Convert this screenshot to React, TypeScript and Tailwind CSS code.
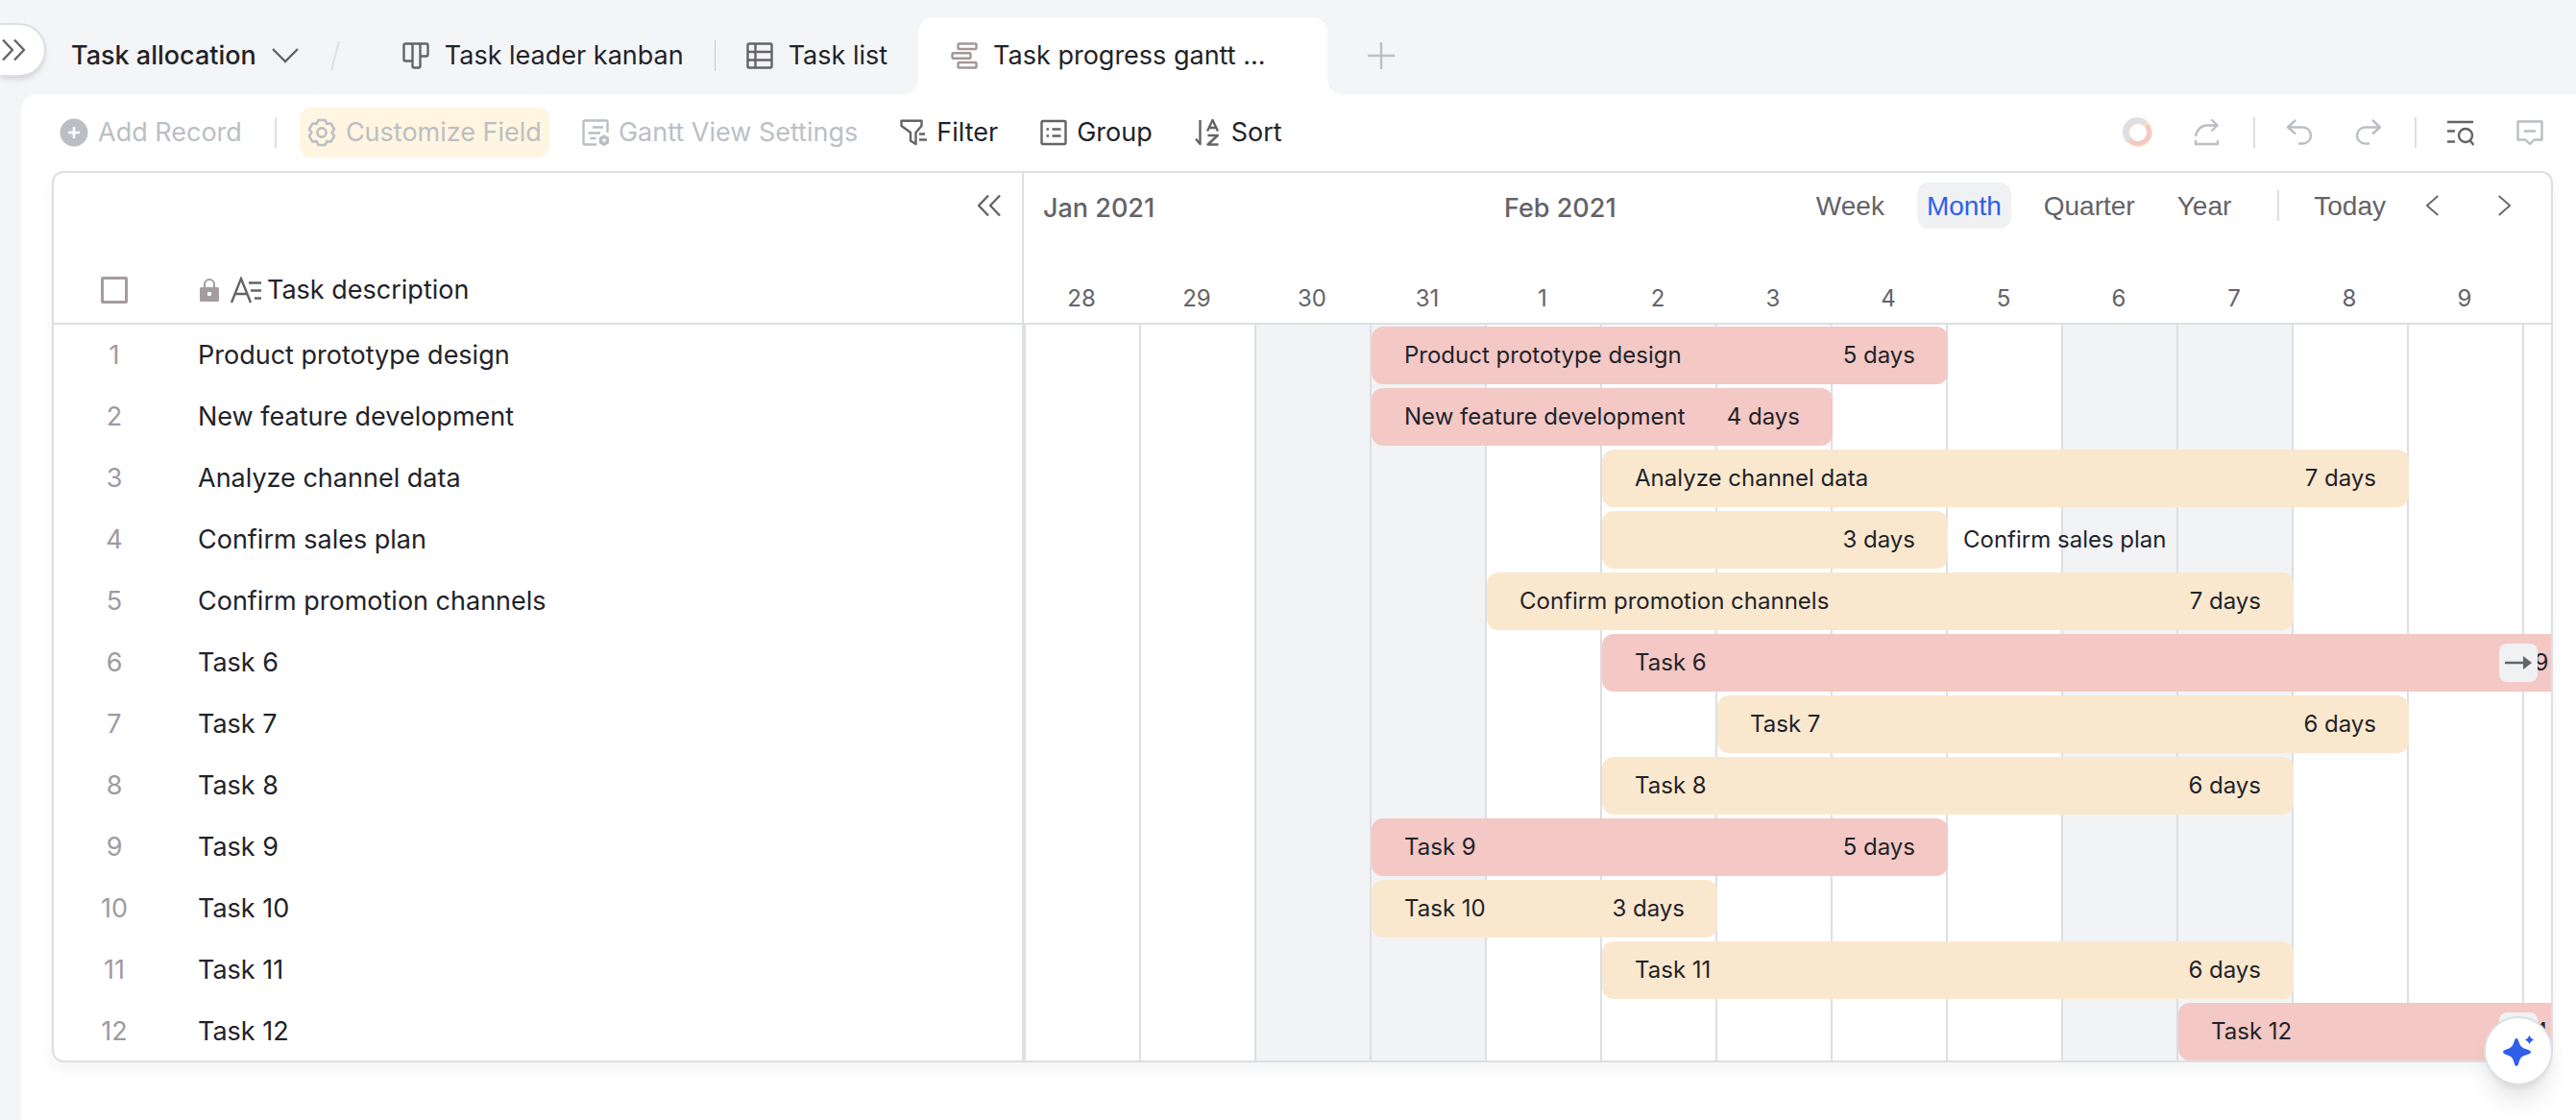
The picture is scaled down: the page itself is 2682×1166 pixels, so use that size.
import React from "react";

interface Task {
  id: number;
  name: string;
  start: number;
  days: number;
  color: "red" | "yellow";
  labelOutside?: boolean;
  overflows?: boolean;
}

// start = column index on the timeline, 1 is Jan 28
const tasks: Task[] = [
  { id: 1, name: "Product prototype design", start: 4, days: 5, color: "red" },
  { id: 2, name: "New feature development", start: 4, days: 4, color: "red" },
  { id: 3, name: "Analyze channel data", start: 6, days: 7, color: "yellow" },
  { id: 4, name: "Confirm sales plan", start: 6, days: 3, color: "yellow", labelOutside: true },
  { id: 5, name: "Confirm promotion channels", start: 5, days: 7, color: "yellow" },
  { id: 6, name: "Task 6", start: 6, days: 9, color: "red", overflows: true },
  { id: 7, name: "Task 7", start: 7, days: 6, color: "yellow" },
  { id: 8, name: "Task 8", start: 6, days: 6, color: "yellow" },
  { id: 9, name: "Task 9", start: 4, days: 5, color: "red" },
  { id: 10, name: "Task 10", start: 4, days: 3, color: "yellow" },
  { id: 11, name: "Task 11", start: 6, days: 6, color: "yellow" },
  { id: 12, name: "Task 12", start: 11, days: 4, color: "red", overflows: true },
];

const days = [
  { label: 28, weekend: false },
  { label: 29, weekend: false },
  { label: 30, weekend: true },
  { label: 31, weekend: true },
  { label: 1, weekend: false },
  { label: 2, weekend: false },
  { label: 3, weekend: false },
  { label: 4, weekend: false },
  { label: 5, weekend: false },
  { label: 6, weekend: true },
  { label: 7, weekend: true },
  { label: 8, weekend: false },
  { label: 9, weekend: false },
];

const barColors = {
  red: "bg-[#f4c8c5]",
  yellow: "bg-[#fae8ce]",
};

interface IconProps {
  children: React.ReactNode;
  className?: string;
}

const Icon: React.FC<IconProps> = ({ children, className = "size-7" }) => (
  <svg
    viewBox="0 0 28 28"
    className={`shrink-0 ${className}`}
    fill="none"
    stroke="currentColor"
    strokeWidth="2.4"
    strokeLinejoin="round"
    aria-hidden="true"
  >
    {children}
  </svg>
);

const KanbanIcon = () => (
  <Icon>
    <path d="M3 1.5h22a1.5 1.5 0 0 1 1.500 1.500v10a1.500 1.500 0 0 1-1.500 1.500h-6.500V25a1.500 1.500 0 0 1-1.500 1.500h-5A1.500 1.500 0 0 1 10.500 25v-5.500H3A1.500 1.500 0 0 1 1.500 18V3A1.500 1.500 0 0 1 3 1.500zM10.500 1.500v18.500M18.500 1.500v14" />
  </Icon>
);

const ListIcon = () => (
  <Icon>
    <rect x="1.5" y="1.5" width="25" height="25" rx="1.5" />
    <path d="M1.5 10h25M1.5 18.500h25M9.500 1.5v25" />
  </Icon>
);

const GanttIcon = () => (
  <Icon className="size-7 text-[#a39699]">
    <rect x="7.5" y="1.5" width="19" height="5.5" rx="1" />
    <rect x="1.5" y="11.2" width="19" height="5.5" rx="1" />
    <rect x="7.5" y="21" width="19" height="5.5" rx="1" />
  </Icon>
);

const AddIcon = () => (
  <Icon className="size-[30px]">
    <circle cx="14" cy="14" r="13.5" fill="currentColor" stroke="none" />
    <path d="M14 8.5v11M8.5 14h11" stroke="#fff" />
  </Icon>
);

const GearIcon = () => (
  <Icon className="size-[30px]">
    <path d="M10.7 1.9h6.600l1.700 3.600 4-.3 3.200 5.600-2.300 3.200 2.300 3.300-3.200 5.600-4-.4-1.700 3.600h-6.600L9 22.500l-4 .4-3.200-5.600L4.100 14l-2.300-3.200L5 5.200l4 .3z" />
    <circle cx="14" cy="14" r="4.3" />
  </Icon>
);

const SettingsListIcon = () => (
  <Icon>
    <path d="M15 26.500H3A1.500 1.500 0 0 1 1.500 25V3A1.500 1.500 0 0 1 3 1.500h22A1.500 1.500 0 0 1 26.500 3v11M11 8.500h11M6.500 14.500H19M8.500 20h6" />
    <path d="M23 17.500l4 2.300v4.600l-4 2.300-4-2.300v-4.600z" fill="currentColor" />
    <circle cx="23" cy="22.100" r="1.800" fill="#fff" stroke="none" />
  </Icon>
);

const FilterIcon = () => (
  <Icon>
    <path d="M1.5 1.8h21V7l-6 7v12L11 22.500V14L1.500 7zM20 15.500h6M20 21.500h8" />
  </Icon>
);

const GroupIcon = () => (
  <Icon>
    <rect x="1.5" y="2" width="25" height="24" rx="1.5" />
    <path d="M6.500 10.500H9M6.500 17.500H9M12.500 10.500h9M12.500 17.500h9" />
  </Icon>
);

const SortIcon = () => (
  <Icon>
    <path d="M5.500 1v25L1 20.500" />
    <path d="M13 12.500L18.500 1 24 12.500M15 9h7M13.500 17h10.300L13.500 26.500h11" />
  </Icon>
);

const Chevrons: React.FC<{ flip?: boolean }> = ({ flip }) => (
  <Icon className={flip ? "size-7 rotate-180" : "size-7"}>
    <path d="M3 3.500L13 14 3 24.500M15 3.500L25 14 15 24.500" />
  </Icon>
);

const Divider: React.FC<{ className?: string }> = ({ className = "" }) => (
  <span className={`h-8 w-0.5 shrink-0 bg-[#dcdfe3] ${className}`} />
);

const TopTabs = () => (
  <header className="flex h-[98px] items-end">
    <button
      type="button"
      aria-label="Expand sidebar"
      className="mb-[18px] flex h-14 w-12 shrink-0 items-center rounded-r-full border-2 border-l-0 border-[#dcdfe3] bg-white text-[#646368] shadow-md"
    >
      <Chevrons />
    </button>
    <nav className="flex h-20 items-center">
      <button type="button" className="ml-[26px] flex items-center gap-4 font-medium">
        Task allocation
        <svg viewBox="0 0 28 16" className="h-4 w-7 text-[#646368]" fill="none" stroke="currentColor" strokeWidth="2.4" aria-hidden="true">
          <path d="M1 1l13 13L27 1" />
        </svg>
      </button>
      <svg viewBox="0 0 12 32" className="ml-8 h-8 w-3 text-[#dcdfe3]" stroke="currentColor" strokeWidth="2" aria-hidden="true">
        <path d="M10 1L2 31" />
      </svg>
      <button type="button" className="ml-16 flex items-center gap-4">
        <span className="text-[#646368]"><KanbanIcon /></span>
        Task leader kanban
      </button>
      <span className="mx-8 h-8 w-px bg-[#c4c7cc]" />
      <button type="button" className="mr-8 flex items-center gap-4">
        <span className="text-[#646368]"><ListIcon /></span>
        Task list
      </button>
      <div className="relative">
        <button type="button" className="flex h-20 w-[426px] items-center gap-4 rounded-t-2xl bg-white pl-[34px]">
          <GanttIcon />
          Task progress gantt ...
        </button>
        <span className="absolute bottom-0 -left-4 size-4 bg-[radial-gradient(circle_at_0_0,transparent_16px,#fff_16px)]" />
        <span className="absolute -right-4 bottom-0 size-4 bg-[radial-gradient(circle_at_100%_0,transparent_16px,#fff_16px)]" />
      </div>
      <button type="button" aria-label="Add view" className="ml-[42px] text-[#bbbfc4]">
        <Icon>
          <path d="M14 0v28M0 14h28" />
        </Icon>
      </button>
    </nav>
  </header>
);

const Toolbar = () => (
  <div className="flex h-20 items-center justify-between pr-[34px] pl-8">
    <div className="flex items-center gap-6">
      <button type="button" disabled className="flex h-13 items-center gap-2.5 pr-2.5 pl-2 text-[#bbbfc4]">
        <AddIcon />
        Add Record
      </button>
      <Divider />
      <button type="button" disabled className="flex h-13 items-center gap-2.5 rounded-xl bg-[#fff5e0] px-2 text-[#bbbfc4]">
        <GearIcon />
        Customize Field
      </button>
      <button type="button" disabled className="flex h-13 items-center gap-2.5 px-2.5 text-[#bbbfc4]">
        <SettingsListIcon />
        Gantt View Settings
      </button>
      <button type="button" className="flex h-13 items-center gap-2.5 px-2.5">
        <span className="text-[#646368]"><FilterIcon /></span>
        Filter
      </button>
      <button type="button" className="flex h-13 items-center gap-2.5 px-2.5">
        <span className="text-[#646368]"><GroupIcon /></span>
        Group
      </button>
      <button type="button" className="flex h-13 items-center gap-2.5 px-2.5">
        <span className="text-[#646368]"><SortIcon /></span>
        Sort
      </button>
    </div>

    <div className="flex items-center text-[#bbbfc4]">
      <button type="button" aria-label="Color rule" className="mr-[42px]">
        <svg viewBox="0 0 32 32" className="size-8" fill="none" aria-hidden="true">
          <circle cx="16" cy="16" r="12" stroke="#fae0bd" strokeWidth="6" />
          <path d="M25 8.500A11.500 11.500 0 0 1 7 23" stroke="#f4c8c5" strokeWidth="4.5" />
          <path d="M7 24.500A12 12 0 0 1 23.500 6.500" stroke="#dcdfe3" strokeWidth="6" />
        </svg>
      </button>
      <button type="button" aria-label="Share" className="mr-[34px]">
        <Icon>
          <path d="M2 18C3 11 8 6.500 14 6.500h10.500M18.500 .5L24.500 6.500 18.500 12.500M2 22v4h23v-4" />
        </Icon>
      </button>
      <Divider />
      <button type="button" disabled aria-label="Undo" className="ml-8">
        <Icon>
          <path d="M10 1L2 8.500l8 7M2 8.500h15.500a8.500 8.500 0 0 1 0 17H13" />
        </Icon>
      </button>
      <button type="button" disabled aria-label="Redo" className="mr-[34px] ml-11">
        <Icon>
          <path d="M18 1l8 7.500-8 7M26 8.500H10.500a8.500 8.500 0 0 0 0 17H15" />
        </Icon>
      </button>
      <Divider />
      <button type="button" aria-label="Find" className="ml-8 text-[#646368]">
        <Icon>
          <path d="M0 3h27M0 12.500h8M0 23.500h8" />
          <circle cx="19" cy="17" r="7" />
          <path d="M23.500 22l4 5" />
        </Icon>
      </button>
      <button type="button" aria-label="Comments" className="ml-11">
        <Icon>
          <path d="M1.500 2.500h25v19h-8L14 26l-4.500-4.500h-8zM8 12.500h12" />
        </Icon>
      </button>
    </div>
  </div>
);

const TaskTable = () => (
  <div className="-mb-0.5 w-[1010px] shrink-0 border-r-2 border-[#dcdfe3]">
    <table className="w-full table-fixed border-separate border-spacing-0 text-left">
      <thead>
        <tr className="h-[158px]">
          <th className="w-[126px] border-b-2 border-[#dcdfe3] pb-5 text-center align-bottom">
            <input
              type="checkbox"
              aria-label="Select all"
              className="inline-block size-7 appearance-none rounded-xs border-3 border-[#a59ca0] align-bottom"
            />
          </th>
          <th className="border-b-2 border-[#dcdfe3] pr-5 pb-4 pl-6 font-normal">
            <div className="flex h-[140px] flex-col items-start justify-between pt-5">
              <button type="button" aria-label="Collapse fields" className="self-end text-[#646368]">
                <Chevrons flip />
              </button>
              <div className="flex items-center">
                <svg viewBox="0 0 20 24" className="mr-3 ml-0.5 h-6 w-5 text-[#a59ca0]" fill="none" aria-hidden="true">
                  <path d="M5 10V6a5 5 0 0 1 10 0v4" stroke="currentColor" strokeWidth="2" />
                  <rect y="9" width="20" height="15" rx="1.5" fill="currentColor" />
                  <circle cx="10" cy="16" r="2.3" fill="#fff" />
                </svg>
                <svg viewBox="0 0 32 28" className="mr-1.5 h-7 w-8 text-[#646368]" fill="none" stroke="currentColor" strokeWidth="2.4" aria-hidden="true">
                  <path d="M1 27L11 2l10 25M4.500 18h13M19 6.500h13M21 14.500h11M25 22.500h7" />
                </svg>
                Task description
              </div>
            </div>
          </th>
        </tr>
      </thead>
      <tbody>
        {tasks.map((task) => (
          <tr key={task.id} className="h-16">
            <td className="text-center text-[#9f9a9f]">{task.id}</td>
            <td className="pl-6">{task.name}</td>
          </tr>
        ))}
      </tbody>
    </table>
  </div>
);

const TimelineHeader = () => (
  <div className="relative flex h-[158px] flex-col justify-between border-b-2 border-[#dcdfe3] text-[#646368]">
    <div className="grid h-[74px] auto-cols-[120px] items-center font-medium">
      <span className="col-span-4 col-start-1 pl-5">Jan 2021</span>
      <span className="col-span-4 col-start-5 pl-5">Feb 2021</span>
    </div>
    <div className="absolute top-2.5 right-10 flex h-12 items-center font-['Liberation_Sans',Arial,sans-serif] text-[28px]">
      <button type="button" className="h-12 px-3 pt-0.5">Week</button>
      <button type="button" className="ml-[22px] h-12 rounded-xl bg-[#f0f1f3] px-2.5 pt-0.5 text-[#2f5eeb]">Month</button>
      <button type="button" className="ml-[22px] h-12 px-3 pt-0.5">Quarter</button>
      <button type="button" className="ml-5 h-12 px-3 pt-0.5">Year</button>
      <Divider className="mx-9" />
      <button type="button" className="mr-10 h-12 pt-0.5">Today</button>
      <button type="button" aria-label="Previous" className="mr-13">
        <Icon className="h-7 w-5">
          <path d="M20 0L4 14l16 14" />
        </Icon>
      </button>
      <button type="button" aria-label="Next">
        <Icon className="h-7 w-5">
          <path d="M8 0l16 14L8 28" />
        </Icon>
      </button>
    </div>
    <div className="flex h-[50px] items-center text-2xl">
      {days.map((day) => (
        <span key={day.label} className="w-[120px] shrink-0 text-center">
          {day.label}
        </span>
      ))}
    </div>
  </div>
);

const TimelineRow: React.FC<{ task: Task }> = ({ task }) => (
  <div className="relative grid h-16 auto-cols-[120px] py-0.5 text-2xl">
    <div
      className={`row-start-1 flex h-15 items-center justify-between rounded-xl px-[34px] whitespace-nowrap ${barColors[task.color]}`}
      style={{ gridColumn: `${task.start} / span ${task.days}` }}
    >
      <span>{task.labelOutside ? "" : task.name}</span>
      <span>{task.days} days</span>
    </div>
    {task.labelOutside && (
      <span
        className="row-start-1 self-center pl-4 whitespace-nowrap"
        style={{ gridColumn: `${task.start + task.days} / span 2` }}
      >
        {task.name}
      </span>
    )}
    {task.overflows && (
      <button
        type="button"
        aria-label="Scroll to end"
        className="absolute top-3 right-3.5 flex size-10 items-center justify-center rounded-lg bg-[#f0f1f3] text-[#646368]"
      >
        <svg viewBox="0 0 28 14" className="h-3.5 w-7" aria-hidden="true">
          <path d="M0 5.700h19V0l9 7-9 7V8.300H0z" fill="currentColor" />
        </svg>
      </button>
    )}
  </div>
);

const Timeline = () => (
  <div className="-mb-0.5 min-w-0 flex-1 overflow-hidden">
    <TimelineHeader />
    <div className="relative border-l-2 border-[#dcdfe3]">
      <div className="absolute inset-0 flex">
        {days.map((day) => (
          <div
            key={day.label}
            className={`w-[120px] shrink-0 border-r-2 border-[#dcdfe3] ${day.weekend ? "bg-[#f2f3f5]" : ""}`}
          />
        ))}
      </div>
      {tasks.map((task) => (
        <TimelineRow key={task.id} task={task} />
      ))}
    </div>
  </div>
);

const App: React.FC = () => {
  return (
    <div className="flex min-h-screen flex-col overflow-hidden bg-[#f4f5f7] font-['Inter','Liberation_Sans',sans-serif] text-[27px] leading-9 text-[#1f2329]">
      <TopTabs />
      <main className="ml-[22px] flex-1 rounded-tl-2xl bg-white pb-15">
        <Toolbar />
        <section className="mr-6 ml-8 flex overflow-hidden rounded-xl border-2 border-[#dcdfe3] shadow-[0_8px_14px_rgba(31,35,41,0.05)]">
          <TaskTable />
          <Timeline />
        </section>
      </main>
      <button
        type="button"
        aria-label="AI assistant"
        className="fixed right-6 bottom-9 flex size-[72px] items-center justify-center rounded-full border-2 border-[#dcdfe3] bg-white text-[#2f5eeb] shadow-xl"
      >
        <svg viewBox="0 0 32 32" className="size-8" fill="currentColor" aria-hidden="true">
          <path d="M14 3c1.500 0 2 2 3 5s2.500 4.700 5.500 5.700S29 15.500 29 17.300s-3.500 2.500-6.500 3.500-4.500 2.700-5.500 5.700-1.500 5.500-3 5.500-2-2.500-3-5.500-2.500-4.700-5.500-5.700S0 19.100 0 17.300s2.500-2.600 5.500-3.600S10 11 11 8s1.500-5 3-5z" />
          <path d="M27.500 0l1.700 2.800L32 4.500l-2.800 1.700L27.500 9l-1.700-2.800L23 4.500l2.800-1.700z" />
        </svg>
      </button>
    </div>
  );
};

export default App;
